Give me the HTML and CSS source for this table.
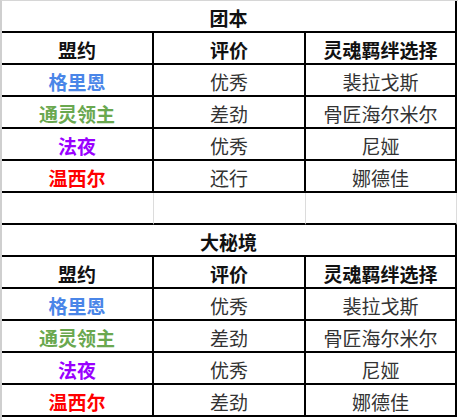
FILE: index.html
```html
<!DOCTYPE html>
<html lang="zh-CN">
<head>
<meta charset="utf-8">
<title>盟约评价</title>
<link rel="stylesheet" href="styles.css">
</head>
<body>
<div class="sheet">
  <div class="grid">
    <div class="cell title span3">团本</div>
    <div class="cell head">盟约</div>
    <div class="cell head">评价</div>
    <div class="cell head last">灵魂羁绊选择</div>

    <div class="cell name blue">格里恩</div>
    <div class="cell">优秀</div>
    <div class="cell last">裴拉戈斯</div>

    <div class="cell name green">通灵领主</div>
    <div class="cell">差劲</div>
    <div class="cell last">骨匠海尔米尔</div>

    <div class="cell name purple">法夜</div>
    <div class="cell">优秀</div>
    <div class="cell last">尼娅</div>

    <div class="cell name red">温西尔</div>
    <div class="cell">还行</div>
    <div class="cell last">娜德佳</div>

    <div class="cell empty"></div>
    <div class="cell empty"></div>
    <div class="cell empty last"></div>

    <div class="cell title span3">大秘境</div>
    <div class="cell head">盟约</div>
    <div class="cell head">评价</div>
    <div class="cell head last">灵魂羁绊选择</div>

    <div class="cell name blue">格里恩</div>
    <div class="cell">优秀</div>
    <div class="cell last">裴拉戈斯</div>

    <div class="cell name green">通灵领主</div>
    <div class="cell">差劲</div>
    <div class="cell last">骨匠海尔米尔</div>

    <div class="cell name purple">法夜</div>
    <div class="cell">优秀</div>
    <div class="cell last">尼娅</div>

    <div class="cell name red">温西尔</div>
    <div class="cell">差劲</div>
    <div class="cell last">娜德佳</div>
  </div>
</div>
</body>
</html>
```

FILE: styles.css
```css
html, body {
  margin: 0;
  padding: 0;
  background: #ffffff;
}

.sheet {
  width: 458px;
  height: 420px;
  box-sizing: border-box;
  border-left: 2px solid #cfcfcf;
  border-top: 1px solid #d6d6d6;
  background: #ffffff;
  font-family: "Noto Sans CJK SC", "Noto Sans", sans-serif;
}

.grid {
  display: grid;
  grid-template-columns: 152px 152px 151px;
  grid-auto-rows: 32px;
}

.cell {
  box-sizing: border-box;
  display: flex;
  align-items: center;
  justify-content: center;
  border-right: 2px solid #000;
  border-bottom: 2px solid #000;
  font-size: 19px;
  color: #333333;
  padding-top: 2px;
  white-space: nowrap;
}

.grid > .cell:first-child {
  grid-auto-rows: 31px;
}

.span3 {
  grid-column: 1 / span 3;
}

.title,
.head {
  font-weight: 700;
  color: #111111;
}

.name {
  font-weight: 700;
}

.blue { color: #4a86e8; }
.green { color: #6aa84f; }
.purple { color: #9900ff; }
.red { color: #ff0000; }

.empty {
  border-right: 1px solid #dcdcdc;
}
```
